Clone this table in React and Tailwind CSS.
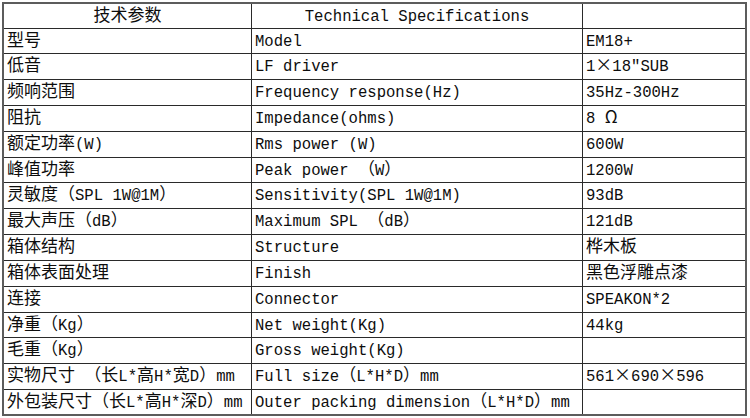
import React from 'react';

// 规格表 — 三列：中文参数 / 英文参数 / 数值
const ROWS = [
  { h: 'h-[25px]', zh: '型号', en: 'Model', val: 'EM18+' },
  { h: 'h-[26px]', zh: '低音', en: 'LF driver', val: '1×18″SUB' },
  { h: 'h-[26px]', zh: '频响范围', en: 'Frequency response(Hz)', val: '35Hz-300Hz' },
  { h: 'h-[26px]', zh: '阻抗', en: 'Impedance(ohms)', val: '8 Ω' },
  { h: 'h-[26px]', zh: '额定功率(W)', en: 'Rms power (W)', val: '600W' },
  { h: 'h-[25px]', zh: '峰值功率', en: 'Peak power （W）', val: '1200W' },
  { h: 'h-[26px]', zh: '灵敏度（SPL 1W@1M）', en: 'Sensitivity(SPL 1W@1M)', val: '93dB' },
  { h: 'h-[26px]', zh: '最大声压（dB）', en: 'Maximum SPL （dB）', val: '121dB' },
  { h: 'h-[26px]', zh: '箱体结构', en: 'Structure', val: '桦木板' },
  { h: 'h-[26px]', zh: '箱体表面处理', en: 'Finish', val: '黑色浮雕点漆' },
  { h: 'h-[26px]', zh: '连接', en: 'Connector', val: 'SPEAKON*2' },
  { h: 'h-[25px]', zh: '净重（Kg）', en: 'Net weight(Kg)', val: '44kg' },
  { h: 'h-[26px]', zh: '毛重（Kg）', en: 'Gross weight(Kg)', val: '' },
  { h: 'h-[26px]', zh: '实物尺寸 （长L*高H*宽D）mm', en: 'Full size（L*H*D）mm', val: '561×690×596' },
  { h: 'h-[24px]', zh: '外包装尺寸（长L*高H*深D）mm', en: 'Outer packing dimension（L*H*D）mm', val: '', last: true },
];

// 中文/全角字符用 CJK 字体，其余用等宽字体；CJK 行高置 0，不撑开行框
const WIDE = /([\u3000-\u9fff\uff00-\uffef×Ω]+)/;
const CJK = "font-['Noto_Sans_CJK_SC',sans-serif] text-[17px] leading-[0]";

function Mixed({ text }) {
  return text.split(WIDE).map((part, i) =>
    WIDE.test(part)
      ? <span key={i} className={CJK}>{part}</span>
      : <span key={i}>{part}</span>
  );
}

function Cell({ text, className = '', center = false }) {
  return (
    <div className={`flex items-center overflow-visible whitespace-pre pt-px ${center ? 'justify-center' : 'pl-[3px]'} ${className}`}>
      {text && <span className="leading-[22px]"><Mixed text={text} /></span>}
    </div>
  );
}

export default function App() {
  return (
    <div className="w-[750px] h-[418px] bg-white pt-[2px] pl-[2px] text-[#0d0d0d] font-['Liberation_Mono','Noto_Sans_CJK_SC',monospace] text-[15.6px]">
      <div className="w-[745px] border-2 border-[#5c5c5c]">
        <div className="grid grid-cols-[248px_331px_162px] h-[25px] border-b border-[#2a2a2a]">
          <Cell text="技术参数" center className="border-r border-[#2a2a2a]" />
          <Cell text="Technical Specifications" center className="border-r border-[#2a2a2a]" />
          <Cell text="" />
        </div>
        {ROWS.map((r) => (
          <div key={r.zh}
               className={`grid grid-cols-[248px_331px_162px] ${r.h} ${r.last ? '' : 'border-b border-[#2a2a2a]'}`}>
            <Cell text={r.zh} className="border-r border-[#2a2a2a]" />
            <Cell text={r.en} className="border-r border-[#2a2a2a]" />
            <Cell text={r.val} />
          </div>
        ))}
      </div>
    </div>
  );
}
